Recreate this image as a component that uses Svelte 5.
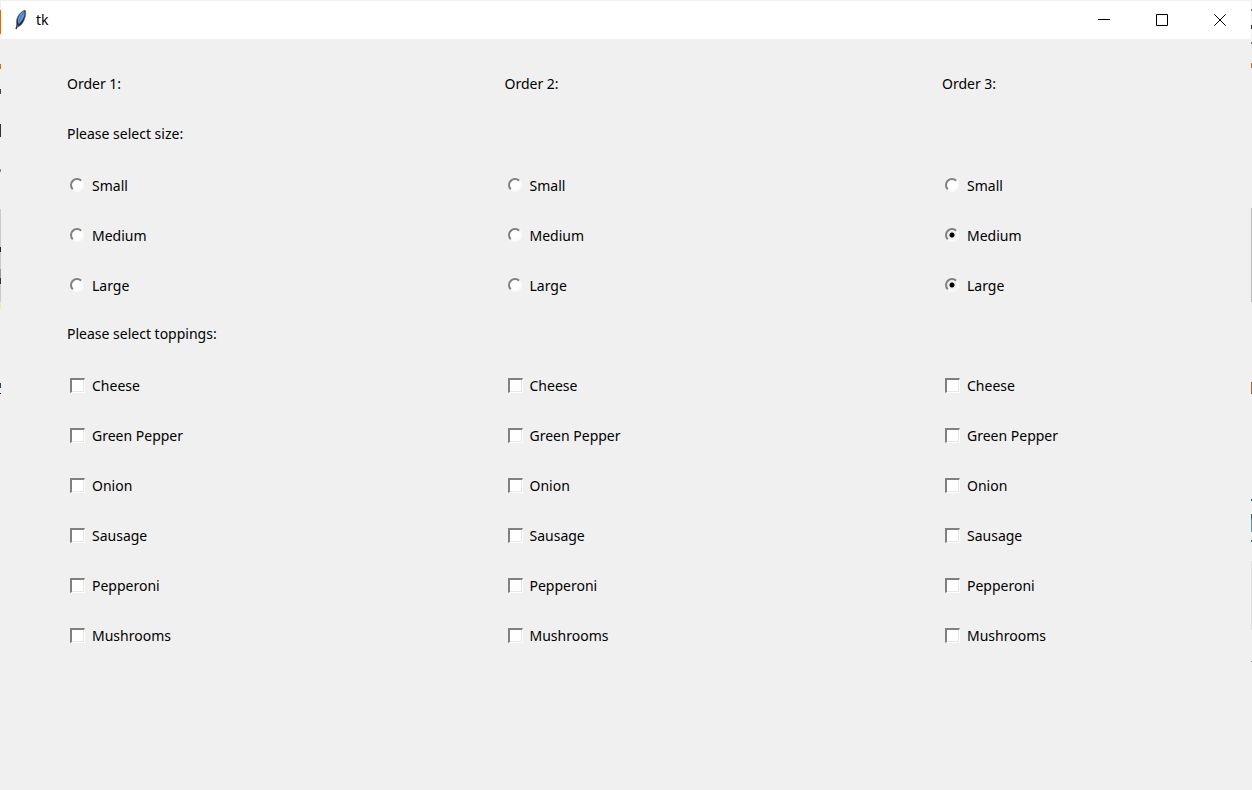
<script lang="ts">
    const sizes = ['Small', 'Medium', 'Large'];
    const toppings = ['Cheese', 'Green Pepper', 'Onion', 'Sausage', 'Pepperoni', 'Mushrooms'];

    let orders = [
        { id: 1, prompts: true, sizes: [false, false, false] },
        { id: 2, prompts: false, sizes: [false, false, false] },
        { id: 3, prompts: false, sizes: [false, true, true] }
    ];
</script>

<div class="window">
    <header>
        <svg class="feather" viewBox="0 0 12 22" aria-hidden="true">
            <path d="M1 20 L3 14" stroke="#333" stroke-width="1.4" />
            <path d="M2 17 C0 11 3 4 10 1 C12 3 10 12 6 16 L3 18 Z" fill="#1c2836" stroke="#77767a" stroke-width=".7" />
            <path d="M3 14 C2 9 5 4 9 2 C11 5 8 11 4 15 Z" fill="#5f9be0" />
            <path d="M2 19 C4 12 6 7 9 3" fill="none" stroke="#2f5a8c" stroke-width=".6" />
        </svg>
        <h1>tk</h1>
        <div class="controls">
            <button type="button" aria-label="Minimize">
                <svg viewBox="0 0 12 12"><path d="M0 5.5H12" /></svg>
            </button>
            <button type="button" aria-label="Maximize">
                <svg viewBox="0 0 12 12"><path d="M.5 .5H11.5V11.5H.5Z" /></svg>
            </button>
            <button type="button" aria-label="Close">
                <svg viewBox="0 0 12 12"><path d="M.3 .3L11.7 11.7M11.7 .3L.3 11.7" /></svg>
            </button>
        </div>
    </header>

    <main>
        {#each orders as order}
            <section>
                <div class="row">Order {order.id}:</div>
                <div class="row">{#if order.prompts}Please select size:{/if}</div>
                {#each sizes as size, i}
                    <label class="row option">
                        <input type="radio" name="order{order.id}-{size}" checked={order.sizes[i]} />
                        {size}
                    </label>
                {/each}
                <div class="row">{#if order.prompts}Please select toppings:{/if}</div>
                {#each toppings as topping}
                    <label class="row option">
                        <input type="checkbox" />
                        {topping}
                    </label>
                {/each}
            </section>
        {/each}
    </main>
</div>

<style>
    :global(body) {
        background: #f0f0f0;
    }

    .window {
        box-sizing: border-box;
        min-height: 100vh;
        border: 1px solid transparent;
        border-bottom: 0;
        background-color: #f0f0f0;
        background-image:
            linear-gradient(
                transparent 10px, #e06c00 10px 34px, transparent 34px 64px, #e06c00 64px 69px,
                transparent 69px 89px, #444 89px 94px, transparent 94px 124px, #333 124px 137px,
                transparent 137px 169px, #888 169px 172px, transparent 172px 209px, #ccc 209px 247px,
                #222 247px 252px, #ccc 252px 269px, #999 269px 278px, #333 278px 284px,
                #ccc 284px 302px, #e8ecb0 302px 309px, transparent 309px 383px, #246 383px 388px,
                transparent 388px 393px, #222 393px 394px, transparent 394px
            ),
            linear-gradient(
                transparent 9px, #777 9px 11px, transparent 11px 25px, #333 25px 29px,
                transparent 29px 42px, #777 42px 44px, transparent 44px 63px, #c96a1a 63px 68px,
                transparent 68px 208px, #bbb 208px 302px, transparent 302px 382px, #a5673a 382px 394px,
                transparent 394px 499px, #276b68 499px 501px, transparent 501px 514px, #276b68 514px 518px,
                #56a09d 520px 532px, transparent 532px 540px, #276b68 540px 542px, transparent 542px 561px,
                #ddd 561px 630px, transparent 630px 661px, #777 661px 662px, transparent 662px
            );
        background-origin: border-box;
        background-position: left top, right top;
        background-size: 1px 100%;
        background-repeat: no-repeat;
        color: #000;
        font-family: "Noto Sans", "Open Sans", sans-serif;
        font-size: 14px;
        line-height: 20px;
    }

    header {
        display: flex;
        align-items: center;
        height: 38px;
        padding: 0 2px 0 14px;
        background: #fff;
    }

    .feather {
        width: 12px;
        height: 22px;
    }

    h1 {
        margin: 0 0 0 9px;
        font-size: 14px;
        font-weight: 400;
    }

    .controls {
        display: flex;
        height: 100%;
        margin-left: auto;
    }

    button {
        display: flex;
        align-items: center;
        justify-content: center;
        width: 58px;
        padding: 0;
        border: 0;
        background: none;
    }

    button svg {
        width: 12px;
        height: 12px;
        fill: none;
        stroke: #000;
        stroke-width: 1;
    }

    main {
        display: grid;
        grid-template-columns: 35% 35% 1fr;
        padding-top: 21px;
    }

    section {
        padding-left: 66px;
    }

    .row {
        display: flex;
        align-items: center;
        box-sizing: border-box;
        height: 50px;
        padding-bottom: 2px;
        white-space: nowrap;
    }

    .option {
        gap: 7px;
        padding: 2px 0 0 3px;
    }

    input {
        appearance: none;
        flex: none;
        box-sizing: border-box;
        width: 15px;
        height: 15px;
        margin: 0 0 2px;
        border: 2px solid;
        border-color: #808080 #fff #fff #808080;
        background: #fff;
    }

    input[type="checkbox"] {
        border-width: 2px 1px 1px 2px;
        box-shadow: inset -1px -1px #e6e6e6;
    }

    input[type="radio"] {
        width: 14px;
        height: 14px;
        margin-right: 1px;
        border-color: #808080 #fafafa #fafafa #808080;
        border-radius: 50%;
    }

    input[type="radio"]:checked {
        background: radial-gradient(circle, #000 0 2px, #f0f0f0 3px);
    }
</style>
